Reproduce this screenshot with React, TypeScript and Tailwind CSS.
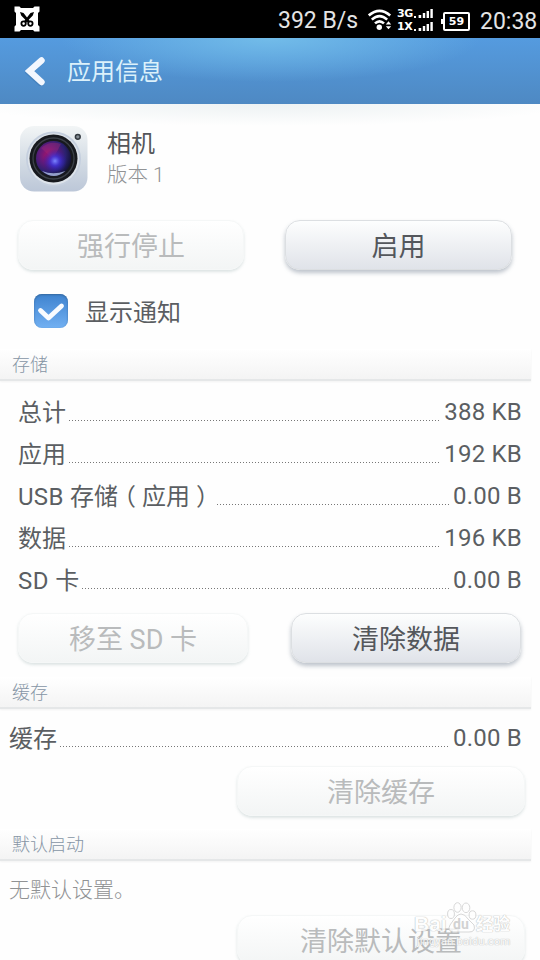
import React from "react";

function Scissors() {
  return (
    <svg width="26" height="26" viewBox="0 0 26 26" className="block">
      <path d="M0.5 0.5H5.5L7 2H19L20.5 0.5H25.5V5.5L24 7V19L25.5 20.5V25.5H20.5L19 24H7L5.5 25.5H0.5V20.5L2 19V7L0.5 5.5Z" fill="#fff" />
      <path d="M6 6L9.5 7L16.2 15.5L14.5 17.5L13 15.8L11.5 17.5L9.8 15.5L16.5 7L20 6L18.8 9.5L13.5 15L12.5 15L7.2 9.5Z" fill="#000" />
      <circle cx="9.6" cy="17.6" r="2.2" fill="#fff" stroke="#000" strokeWidth="1.8" />
      <circle cx="16.4" cy="17.6" r="2.2" fill="#fff" stroke="#000" strokeWidth="1.8" />
    </svg>
  );
}

function Wifi() {
  return (
    <svg width="24" height="22" viewBox="0 0 24 22" className="block">
      <g fill="none" stroke="#fff" strokeWidth="2.6">
        <path d="M0.8 6.4Q11.5 -2.8 22.2 6.4" />
        <path d="M3.8 10.6Q11.5 3.8 19.2 10.6" />
        <path d="M7 14.4Q11.5 10.2 16 14.4" />
      </g>
      <circle cx="11.3" cy="18.2" r="2.7" fill="#fff" />
      <path d="M20.5 12.3L23.2 15.4H17.8ZM20.5 20.3L23.2 17.2H17.8Z" fill="#fff" />
    </svg>
  );
}

function Bars() {
  return (
    <svg width="19" height="9" viewBox="0 0 19 9" className="block">
      <path d="M0 7h2v2h-2zM4.6 6h2.6v3h-2.6zM8.8 4h2.4v5h-2.4zM12.6 2h2.4v7h-2.4zM16.4 0h2.4v9h-2.4z" fill="#fff" />
    </svg>
  );
}

function StatusBar() {
  return (
    <div className="flex h-[38px] items-center bg-black pl-[14px] pr-[3px] text-[23px] font-normal leading-[38px] text-[#e4e4e4]">
      <div className="mr-auto">
        <Scissors />
      </div>
      <span className="mt-[3px] w-[82px] whitespace-nowrap">392 B/s</span>
      <div className="ml-[8px] mt-[2px]">
        <Wifi />
      </div>
      <div className="ml-[5px] mt-[1px] flex flex-col gap-[4px] text-[11px] font-bold leading-[9px] text-white">
        <div className="flex gap-[2px]">
          <span className="w-[15px] font-['DejaVu_Sans'] tracking-[-0.5px]">3G</span>
          <Bars />
        </div>
        <div className="flex gap-[2px]">
          <span className="w-[15px] font-['DejaVu_Sans'] tracking-[-0.5px]">1X</span>
          <Bars />
        </div>
      </div>
      <div className="ml-[8px] mt-[5px] flex items-center">
        <div className="h-[5px] w-[2px] bg-white" />
        <div className="h-[19px] w-[27px] rounded-[2px] border-2 border-white text-center font-['DejaVu_Sans'] text-[11px] font-bold leading-[15px] text-white">
          59
        </div>
      </div>
      <span className="ml-[10px] mt-[5px] w-[57px] whitespace-nowrap">20:38</span>
    </div>
  );
}

function CameraIcon() {
  return (
    <svg width="70" height="70" viewBox="0 0 70 70" className="block">
      <defs>
        <linearGradient id="case" x1="0" y1="0" x2="0" y2="1">
          <stop offset="0" stopColor="#f2f5f6" />
          <stop offset="0.5" stopColor="#d5dde5" />
          <stop offset="1" stopColor="#bcc7d8" />
        </linearGradient>
        <radialGradient id="lens" cx="0.35" cy="0.4" r="0.7">
          <stop offset="0" stopColor="#a51469" />
          <stop offset="0.35" stopColor="#641a7c" />
          <stop offset="0.7" stopColor="#2b2170" />
          <stop offset="1" stopColor="#10112e" />
        </radialGradient>
        <radialGradient id="glow">
          <stop offset="0" stopColor="#7b86ff" />
          <stop offset="0.4" stopColor="#3e35dd" stopOpacity="0.8" />
          <stop offset="1" stopColor="#2719b0" stopOpacity="0" />
        </radialGradient>
      </defs>
      <rect x="1" y="2" width="67.5" height="65.5" rx="14" fill="url(#case)" />
      <circle cx="34.5" cy="35" r="27.5" fill="#c5cfde" />
      <circle cx="34.5" cy="35" r="25.7" fill="#dde3ea" />
      <circle cx="34.5" cy="34.5" r="24" fill="#17191e" />
      <circle cx="34.5" cy="34.5" r="20.5" fill="none" stroke="#3c4148" strokeWidth="1.3" />
      <circle cx="34.5" cy="34.5" r="17.5" fill="url(#lens)" />
      <path d="M34 35L22 24Q31 16 42 20Z" fill="#a62b79" opacity="0.4" />
      <circle cx="36" cy="37" r="12" fill="url(#glow)" />
      <path d="M23 47Q34 51.5 46.5 47Q35 57 23 47Z" fill="#b0c1e6" opacity="0.8" />
      <circle cx="58.8" cy="12.8" r="2.4" fill="#868e95" stroke="#343a40" strokeWidth="1.5" />
    </svg>
  );
}

function Button({ children, className, disabled = false }: { children: React.ReactNode; className: string; disabled?: boolean }) {
  const look = disabled
    ? "border-[#f5f7f7] from-white to-[#f3f5f5] text-[#b9bbbc] shadow-[0_2px_3px_rgba(125,150,150,0.25)]"
    : "border-[#dcdfe2] from-[#fdfefe] to-[#e0e3e9] text-[#54575c] shadow-[0_3px_4px_rgba(95,110,130,0.4)]";
  return (
    <button className={`h-[50px] shrink-0 rounded-[15px] border bg-linear-to-b pt-[5px] text-[27px] font-normal leading-[43px] whitespace-nowrap ${look} ${className}`}>
      {children}
    </button>
  );
}

function Section({ children }: { children: React.ReactNode }) {
  return (
    <div className="h-[32px] w-[531px] border-b-2 border-[#e5e7e8] bg-linear-to-b from-white to-[#f4f4f4] pl-[12px] text-[18px] leading-[32px] text-[#8695a5] shadow-[0_1px_2px_rgba(0,0,0,0.05)]">
      {children}
    </div>
  );
}

function Row({ label, value }: { label: React.ReactNode; value: string }) {
  return (
    <div className="flex h-[42px] text-[24px] font-normal leading-[42px] text-[#5b5e62]">
      <span className="whitespace-nowrap pt-px">{label}</span>
      <div className="ml-[3px] mr-[3px] mt-[29px] h-px flex-1 bg-[repeating-linear-gradient(90deg,#777_0_1px,transparent_1px_3px)]" />
      <span className="whitespace-nowrap tracking-[0.2px]">{value}</span>
    </div>
  );
}

function Paren({ children }: { children: string }) {
  return <span className="inline-block w-6 text-center [font-feature-settings:'halt']">{children}</span>;
}

function Watermark() {
  return (
    <div className="absolute left-[414px] top-[902px] h-[48px] w-[100px] font-normal text-[#fefefe] opacity-80 [text-shadow:0_0_1px_#aaa,0_0_1px_#bbb]">
      <svg width="100" height="48" viewBox="0 0 100 48" className="absolute inset-0">
        <g fill="#fff" stroke="#cfcfcf" strokeWidth="1">
          <ellipse cx="37" cy="12" rx="3.4" ry="4.5" />
          <ellipse cx="43.5" cy="5.5" rx="3.6" ry="4.8" />
          <ellipse cx="52" cy="5.8" rx="3.8" ry="4.8" />
          <ellipse cx="58.5" cy="13" rx="3.4" ry="4.2" />
          <path d="M47 12Q51 12 54 17L60 23Q62 30 55 30H39Q33 29 36 23L41 16Q44 12 47 12Z" />
        </g>
      </svg>
      <div className="relative flex h-[32px] pt-[11px] text-[20px] font-bold leading-[22px]">
        <span className="w-[39px] font-['Liberation_Sans'] text-[21px]">Bai</span>
        <span className="w-[23px] text-[14px] text-[#c8c8c8] [text-shadow:none]">du</span>
        <span className="text-[17px] whitespace-nowrap">经验</span>
      </div>
      <div className="relative ml-[3px] text-[11.5px] leading-[14px] whitespace-nowrap">jingyan.baidu.com</div>
    </div>
  );
}

export default function App() {
  return (
    <div className="relative h-[960px] w-[540px] overflow-hidden bg-[#fefefe] font-[Roboto,'Noto_Sans_CJK_SC',sans-serif] font-light">
      <StatusBar />
      <header className="flex h-[66px] items-center bg-[radial-gradient(ellipse_210px_44px_at_50%_0,#72bce9,transparent),linear-gradient(#559bdf,#4e89c3)] pl-[25px]">
        <svg width="21" height="30" viewBox="0 0 21 30" className="block">
          <path d="M16 4L4 15L16 26" transform="translate(0 1.5)" fill="none" stroke="#346fa8" strokeOpacity="0.4" strokeWidth="6" strokeLinecap="round" />
          <path d="M16.5 4.5L4.5 15L16.5 26" fill="none" stroke="#f3f7fe" strokeWidth="6.4" strokeLinecap="round" strokeLinejoin="miter" />
        </svg>
        <h1 className="ml-[21px] pt-[2px] text-[24px] font-normal leading-[66px] text-[#dcf1fb]">应用信息</h1>
      </header>
      <main className="bg-[radial-gradient(ellipse_300px_22px_at_50%_0,#edf2f3,transparent)]">
        <div className="flex h-[116px] pl-[19px] pt-[20px]">
          <CameraIcon />
          <div className="ml-[18px] pt-[2px]">
            <div className="text-[24px] font-normal leading-[36px] text-[#54565a]">相机</div>
            <div className="text-[20.5px] leading-[27px] text-[#919395]">版本 1</div>
          </div>
        </div>
        <div className="flex gap-[41px] pl-[18px]">
          <Button disabled className="w-[226px]">强行停止</Button>
          <Button className="w-[227px]">启用</Button>
        </div>
        <div className="flex h-[79px] items-start pl-[34px] pt-[24px]">
          <div className="size-[34px] rounded-[8px] bg-linear-to-b from-[#3e83cf] to-[#72b0f2] shadow-[inset_0_1px_2px_#36699f]">
            <svg width="34" height="34" viewBox="0 0 34 34" className="block">
              <path d="M6.5 16.5L14.5 24L27.5 12" fill="none" stroke="#f8fbff" strokeWidth="4.8" strokeLinecap="round" strokeLinejoin="round" />
            </svg>
          </div>
          <span className="ml-[17px] pt-[2px] text-[24px] font-normal leading-[35px] text-[#5b5e62]">显示通知</span>
        </div>
        <Section>存储</Section>
        <div className="pl-[18px] pr-[18px] pt-[10px]">
          <Row label="总计" value="388 KB" />
          <Row label="应用" value="192 KB" />
          <Row label={<><span className="tracking-[0.3px]">USB </span>存储<Paren>（</Paren>应用<Paren>）</Paren></>} value="0.00 B" />
          <Row label="数据" value="196 KB" />
          <Row label={<><span className="tracking-[0.4px]">SD </span>卡</>} value="0.00 B" />
        </div>
        <div className="flex gap-[43px] pl-[18px] pt-[12px]">
          <Button disabled className="w-[230px]">移至 SD 卡</Button>
          <Button className="w-[230px]">清除数据</Button>
        </div>
        <div className="pt-[14px]">
          <Section>缓存</Section>
        </div>
        <div className="pl-[9px] pr-[18px] pt-[8px]">
          <Row label="缓存" value="0.00 B" />
        </div>
        <div className="flex justify-end pr-[15px] pt-[7px]">
          <Button disabled className="w-[288px]">清除缓存</Button>
        </div>
        <div className="pt-[13px]">
          <Section>默认启动</Section>
        </div>
        <p className="h-[54px] pl-[9px] pt-[9px] text-[21px] leading-[40px] text-[#909294]">无默认设置。</p>
        <div className="flex justify-end pr-[15px]">
          <Button disabled className="w-[288px]">清除默认设置</Button>
        </div>
      </main>
      <Watermark />
    </div>
  );
}
